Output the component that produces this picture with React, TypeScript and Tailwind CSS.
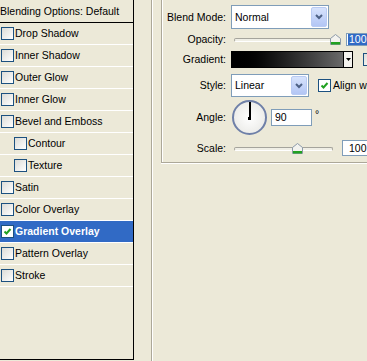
import React from "react";

const styles = [
  { label: "Drop Shadow" },
  { label: "Inner Shadow" },
  { label: "Outer Glow" },
  { label: "Inner Glow" },
  { label: "Bevel and Emboss" },
  { label: "Contour", indent: true },
  { label: "Texture", indent: true },
  { label: "Satin" },
  { label: "Color Overlay" },
  { label: "Gradient Overlay", checked: true, active: true },
  { label: "Pattern Overlay" },
  { label: "Stroke" },
];

function CheckBox({ checked = false, white = false }: { checked?: boolean; white?: boolean }) {
  return (
    <span
      className={`shrink-0 w-[13px] h-[13px] border border-[#1C5180] flex items-center justify-center ${
        white ? "bg-white" : "bg-linear-to-br from-[#DCDCD7] to-white"
      }`}
    >
      {checked && (
        <svg width="9" height="9" viewBox="0 0 9 9">
          <path d="M1.5 4.5 L3.5 6.5 L7.5 2" fill="none" stroke="#21A121" strokeWidth="2" />
        </svg>
      )}
    </span>
  );
}

function ComboButton() {
  return (
    <span className="shrink-0 w-[16px] h-full border border-[#B9CBF3] rounded-[2px] bg-linear-to-b from-[#D7E3FC] to-[#B3C6F5] flex items-center justify-center">
      <svg width="8" height="6" viewBox="0 0 8 6">
        <path d="M1 1 L4 4 L7 1" fill="none" stroke="#4D6185" strokeWidth="2" />
      </svg>
    </span>
  );
}

function Thumb() {
  return (
    <svg width="11" height="11" viewBox="0 0 11 11">
      <path d="M0.5 4.5 L5.5 0.5 L10.5 4.5 L10.5 10.5 L0.5 10.5 Z" fill="#F3F3EF" stroke="#8C9AA8" />
      <rect x="1" y="8" width="9" height="2.5" fill="#21A121" />
    </svg>
  );
}

function Track({ width, thumbLeft }: { width: number; thumbLeft: number }) {
  return (
    <div className="relative h-[11px] shrink-0" style={{ width }}>
      <div className="absolute left-0 right-0 top-[4px] h-[4px] rounded-[2px] border border-[#A5A49C] border-b-white bg-[#F0EFE6]" />
      <div className="absolute top-0" style={{ left: thumbLeft }}>
        <Thumb />
      </div>
    </div>
  );
}

function Label({ children }: { children: React.ReactNode }) {
  return <span className="w-[64px] shrink-0 text-right">{children}</span>;
}

export default function App() {
  return (
    <div className="w-[367px] h-[361px] overflow-hidden bg-[#ECE9D8] flex text-black text-[10.5px] font-['Liberation_Sans',Arial,sans-serif] leading-none">
      {/* style list */}
      <div className="w-[134px] h-[360px] shrink-0 border-r border-b border-black flex flex-col">
        <div className="h-[23px] border-b border-black flex items-center whitespace-nowrap">
          Blending Options: Default
        </div>
        {styles.map((s) => (
          <div
            key={s.label}
            className={`h-[22px] border-b border-white flex items-center gap-[1px] whitespace-nowrap ${
              s.indent ? "pl-[14px]" : "pl-[1px]"
            } ${s.active ? "bg-[#316AC5] text-white font-bold" : ""}`}
          >
            <CheckBox checked={s.checked} white={s.active} />
            <span>{s.label}</span>
          </div>
        ))}
      </div>

      {/* separator */}
      <div className="ml-[17px] w-[2px] h-[361px] shrink-0 border-l border-[#ACA899] border-r border-r-white" />

      {/* gradient group box */}
      <div className="ml-[8px] w-[220px] h-[163px] shrink-0 border-l border-b border-[#ACA899] shadow-[inset_1px_0_0_#fff,0_1px_0_#fff] flex flex-col">
        <div className="mt-[5px] h-[24px] flex items-center">
          <Label>Blend Mode:</Label>
          <div className="shrink-0 ml-[5px] w-[98px] h-[24px] bg-white border border-[#7F9DB9] flex items-center justify-between pl-[3px] py-[1px] pr-[1px]">
            <span>Normal</span>
            <ComboButton />
          </div>
        </div>

        <div className="mt-[4px] h-[13px] flex items-center">
          <Label>Opacity:</Label>
          <div className="ml-[8px] shrink-0">
            <Track width={106} thumbLeft={96} />
          </div>
          <div className="shrink-0 ml-[6px] h-[13px] border border-[#7F9DB9] bg-white flex items-center pl-[1px]">
            <span className="bg-[#316AC5] text-white px-[1px] h-[11px] flex items-center">100</span>
          </div>
        </div>

        <div className="mt-[5px] h-[17px] flex items-center">
          <Label>Gradient:</Label>
          <div className="shrink-0 ml-[5px] w-[122px] h-[17px] border border-black flex">
            <div className="flex-1 bg-linear-to-r from-black to-[#6A6A6A]" />
            <div className="w-[9px] border-l border-black bg-[#F4F3EE] flex items-center justify-center">
              <svg width="5" height="3" viewBox="0 0 5 3">
                <path d="M0 0 H5 L2.5 3 Z" fill="#000" />
              </svg>
            </div>
          </div>
          <div className="shrink-0 ml-[10px] w-[13px] h-[13px] border border-[#1C5180] bg-linear-to-br from-[#DCDCD7] to-white" />
        </div>

        <div className="mt-[6px] h-[23px] flex items-center">
          <Label>Style:</Label>
          <div className="shrink-0 ml-[5px] w-[78px] h-[23px] bg-white border border-[#7F9DB9] flex items-center justify-between pl-[3px] py-[1px] pr-[1px]">
            <span>Linear</span>
            <ComboButton />
          </div>
          <div className="shrink-0 ml-[9px] flex items-center gap-[2px] whitespace-nowrap">
            <CheckBox checked white />
            <span>Align with Layer</span>
          </div>
        </div>

        <div className="mt-[3px] h-[35px] flex items-center">
          <Label>Angle:</Label>
          <div className="shrink-0 ml-[6px] relative w-[35px] h-[35px] rounded-full border-2 border-[#6F80A8] bg-radial from-white to-[#E6E6E2]">
            <div className="absolute left-[15px] top-0 w-[1.5px] h-[16px] bg-black" />
            <div className="absolute left-[14px] top-[15px] w-[3px] h-[3px] bg-black" />
          </div>
          <div className="shrink-0 ml-[4px] w-[41px] h-[17px] border border-[#7F9DB9] bg-white flex items-center pl-[3px]">
            90
          </div>
          <span className="ml-[3px] self-start mt-[9px]">°</span>
        </div>

        <div className="mt-[5px] h-[16px] flex items-center">
          <Label>Scale:</Label>
          <div className="ml-[8px] shrink-0">
            <Track width={99} thumbLeft={58} />
          </div>
          <div className="shrink-0 ml-[9px] w-[40px] h-[16px] border border-[#7F9DB9] bg-white flex items-center pl-[6px]">
            100
          </div>
        </div>
      </div>
    </div>
  );
}
